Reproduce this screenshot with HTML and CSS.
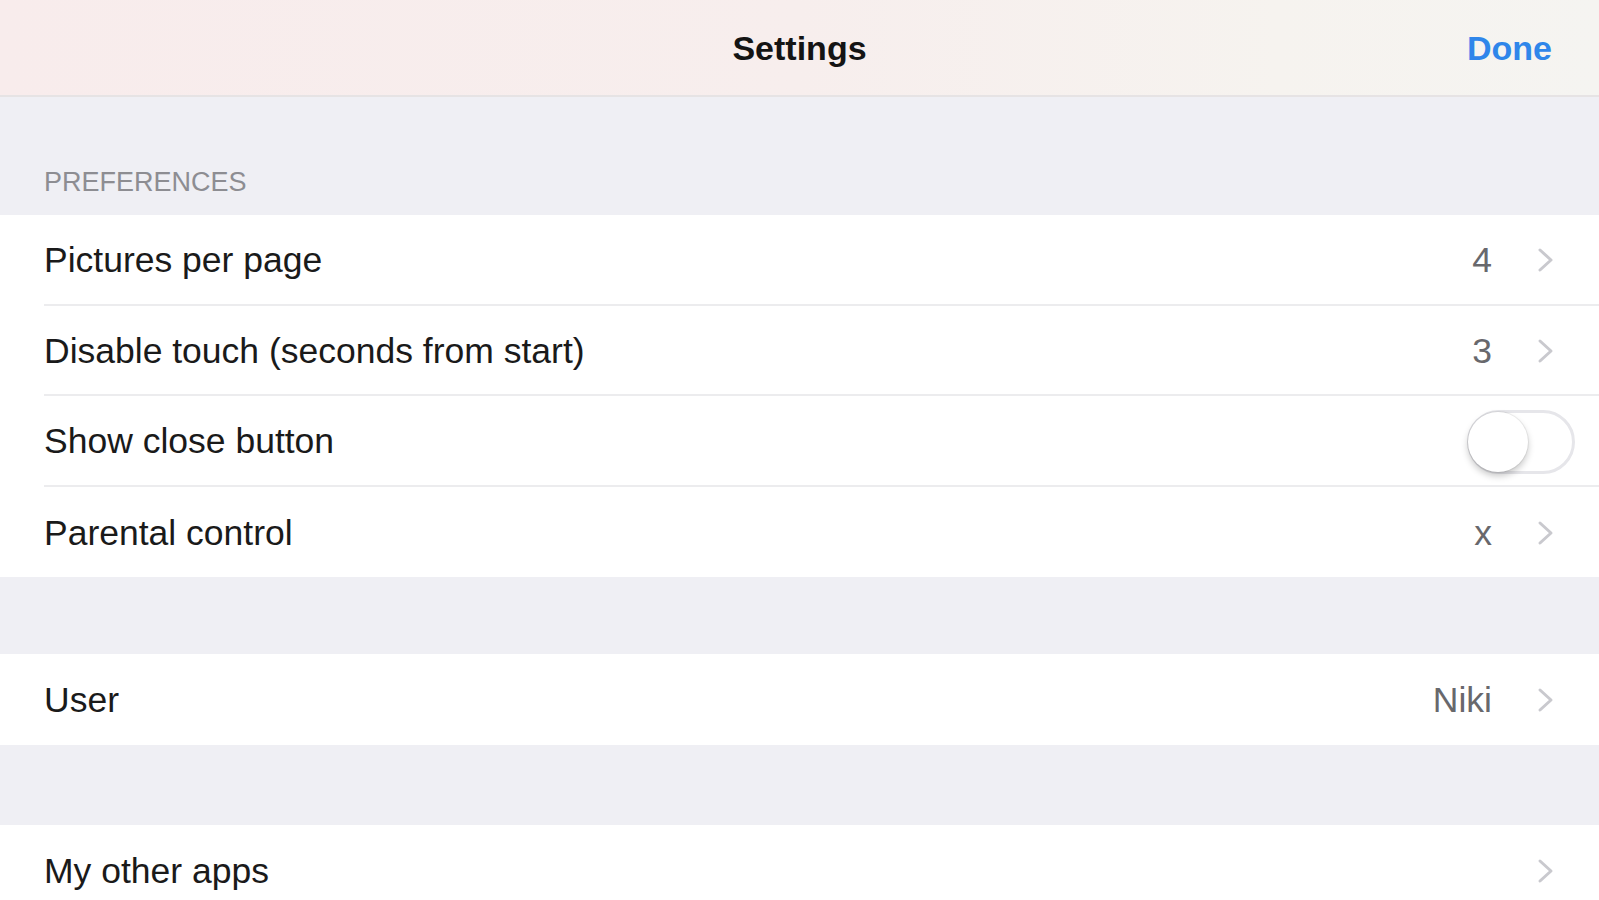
FILE: index.html
```html
<!DOCTYPE html>
<html>
<head>
<meta charset="utf-8">
<title>Settings</title>
<link rel="stylesheet" href="styles.css">
</head>
<body>
<div class="screen">
  <header class="navbar">
    <div class="nav-side"></div>
    <div class="nav-title">Settings</div>
    <div class="nav-side nav-right"><span class="done">Done</span></div>
  </header>

  <div class="section-header">PREFERENCES</div>
  <div class="group">
    <div class="row">
      <div class="row-inner">
        <span class="label">Pictures per page</span>
        <span class="value">4</span>
        <svg class="chevron" viewBox="0 0 18 26" width="18" height="26"><polyline points="3,3 14,13 3,23"/></svg>
      </div>
    </div>
    <div class="row">
      <div class="row-inner">
        <span class="label">Disable touch (seconds from start)</span>
        <span class="value">3</span>
        <svg class="chevron" viewBox="0 0 18 26" width="18" height="26"><polyline points="3,3 14,13 3,23"/></svg>
      </div>
    </div>
    <div class="row">
      <div class="row-inner toggle-row">
        <span class="label">Show close button</span>
        <span class="switch"><span class="knob"></span></span>
      </div>
    </div>
    <div class="row">
      <div class="row-inner last">
        <span class="label">Parental control</span>
        <span class="value">x</span>
        <svg class="chevron" viewBox="0 0 18 26" width="18" height="26"><polyline points="3,3 14,13 3,23"/></svg>
      </div>
    </div>
  </div>

  <div class="gap gap-a"></div>
  <div class="group">
    <div class="row">
      <div class="row-inner last">
        <span class="label">User</span>
        <span class="value">Niki</span>
        <svg class="chevron" viewBox="0 0 18 26" width="18" height="26"><polyline points="3,3 14,13 3,23"/></svg>
      </div>
    </div>
  </div>

  <div class="gap gap-b"></div>
  <div class="group">
    <div class="row">
      <div class="row-inner last">
        <span class="label">My other apps</span>
        <span class="value"></span>
        <svg class="chevron" viewBox="0 0 18 26" width="18" height="26"><polyline points="3,3 14,13 3,23"/></svg>
      </div>
    </div>
  </div>
</div>
</body>
</html>
```

FILE: styles.css
```css
html, body {
  margin: 0;
  padding: 0;
}

body {
  background: #efeff4;
  font-family: "Liberation Sans", Arial, sans-serif;
  color: #1a1a1a;
}

.screen {
  width: 1599px;
  height: 900px;
  overflow: hidden;
  display: flex;
  flex-direction: column;
  background: #efeff4;
}

.navbar {
  height: 97px;
  flex: 0 0 97px;
  display: grid;
  grid-template-columns: 1fr auto 1fr;
  align-items: center;
  background: linear-gradient(90deg, #f8ecec 0%, #f7eeed 50%, #f6f3ef 80%, #f5f4f1 100%);
  border-bottom: 2px solid #e6e3e4;
  box-sizing: border-box;
}

.nav-right {
  display: flex;
  justify-content: flex-end;
  padding-right: 47px;
}

.nav-title {
  font-size: 34px;
  font-weight: bold;
  color: #141414;
  margin-top: 2px;
}

.done {
  font-size: 34px;
  font-weight: bold;
  color: #2f86ea;
  margin-top: 2px;
}

.section-header {
  height: 118px;
  flex: 0 0 118px;
  box-sizing: border-box;
  display: flex;
  align-items: flex-end;
  padding: 0 0 19px 44px;
  font-size: 27px;
  line-height: 27px;
  color: #8d8d92;
}

.group {
  background: #ffffff;
  flex: 0 0 auto;
}

.row {
  height: 90.5px;
  padding-left: 44px;
  display: flex;
}

.row-inner {
  flex: 1;
  display: flex;
  align-items: center;
  border-bottom: 2px solid #ececee;
  padding-right: 44px;
}

.row-inner.last {
  border-bottom: none;
}

.toggle-row {
  padding-right: 24px;
}

.label {
  flex: 1;
  font-size: 35.5px;
  color: #1a1a1a;
  padding-top: 3px;
}

.value {
  font-size: 35.5px;
  color: #68686c;
  margin-right: 45px;
  padding-top: 3px;
}

.chevron {
  display: block;
  fill: none;
  stroke: #c9c9ce;
  stroke-width: 3;
  stroke-linecap: round;
  stroke-linejoin: round;
  margin-top: 2px;
}

.switch {
  width: 108px;
  height: 64px;
  box-sizing: border-box;
  border: 3px solid #e6e6ea;
  border-radius: 32px;
  background: #ffffff;
  display: flex;
  align-items: center;
  margin-top: 3px;
}

.knob {
  width: 60px;
  height: 60px;
  border-radius: 50%;
  background: #ffffff;
  box-shadow: 0 4px 7px rgba(0, 0, 0, 0.22), 0 0 0 1px rgba(0, 0, 0, 0.06);
  margin-left: -2px;
}

.gap {
  flex: 0 0 auto;
}

.gap-a {
  height: 77px;
}

.gap-b {
  height: 80px;
}
```
